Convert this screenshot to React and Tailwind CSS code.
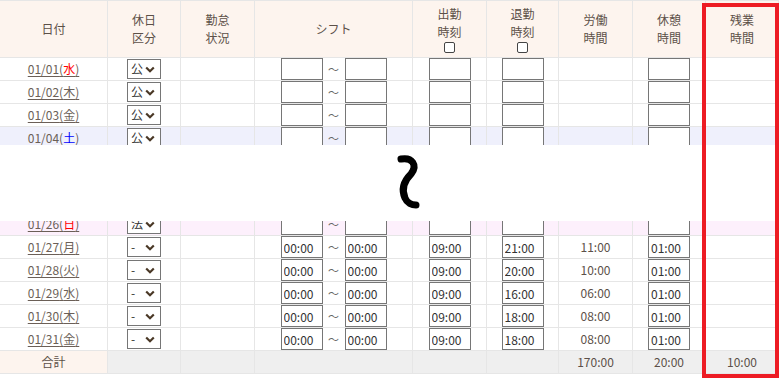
import React from 'react';

const W = ['w-[108px]', 'w-[73px]', 'w-[74px]', 'w-[158px]', 'w-[74px]', 'w-[72px]', 'w-[74px]', 'w-[73px]', 'w-[73px]'];

const Cell = ({ i, className = '', children }) => (
  <div className={`${W[i]} shrink-0 h-full border-r border-[#e6e6e6] flex items-center justify-center ${className}`}>
    {children}
  </div>
);

const Chevron = () => (
  <svg width="10" height="7" viewBox="0 0 10 7">
    <path d="M1.2 1.5 L5 5.2 L8.8 1.5" fill="none" stroke="#4a3826" strokeWidth="2.2" />
  </svg>
);

const Select = ({ value }) => (
  <div className="w-[34px] h-[20px] border border-[#767676] bg-white flex items-center justify-between pl-[3px] pr-[5px] text-[12px] text-[#333]">
    <span>{value}</span>
    <Chevron />
  </div>
);

const Box = ({ value = '' }) => (
  <input
    readOnly
    value={value}
    className="w-[42px] h-[22px] border border-[#767676] bg-white px-[2px] text-[12px] text-[#333] outline-none"
  />
);

const Row = ({ date, dow, dowColor, kubun, shift, start = '', end = '', work = '', rest = '', bg = 'bg-white' }) => (
  <div className={`flex h-[23px] shrink-0 border-b border-[#e6e6e6] ${bg}`}>
    <Cell i={0}>
      <a className="text-[12px] text-[#6b5f57] underline underline-offset-2 cursor-pointer">
        {date}(<span className={dowColor}>{dow}</span>)
      </a>
    </Cell>
    <Cell i={1}>
      <Select value={kubun} />
    </Cell>
    <Cell i={2} />
    <Cell i={3}>
      <Box value={shift} />
      <span className="w-[22px] text-center text-[11px] text-[#666]">～</span>
      <Box value={shift} />
    </Cell>
    <Cell i={4}>
      <Box value={start} />
    </Cell>
    <Cell i={5}>
      <Box value={end} />
    </Cell>
    <Cell i={6} className="text-[12px] text-[#5c5048]">{work}</Cell>
    <Cell i={7}>
      <Box value={rest} />
    </Cell>
    <Cell i={8} />
  </div>
);

const Head = ({ i, lines, check }) => (
  <Cell i={i} className="flex-col leading-[18px] text-[12px] text-[#5c5048]">
    {lines.map((l) => (
      <span key={l}>{l}</span>
    ))}
    {check && <span className="mt-[1px] w-[11px] h-[11px] border border-[#444] rounded-[2px] bg-white" />}
  </Cell>
);

const tail = [
  ['01/27', '月', '21:00', '11:00'],
  ['01/28', '火', '20:00', '10:00'],
  ['01/29', '水', '16:00', '06:00'],
  ['01/30', '木', '18:00', '08:00'],
  ['01/31', '金', '18:00', '08:00'],
];

export default function App() {
  return (
    <div className="relative w-[779px] h-[380px] bg-white overflow-hidden font-['Noto_Sans_CJK_JP','Noto_Sans',sans-serif]">
      <div className="flex h-[58px] border-t border-b border-[#e6e6e6] bg-[#fdf4ee]">
        <Head i={0} lines={['日付']} />
        <Head i={1} lines={['休日', '区分']} />
        <Head i={2} lines={['勤怠', '状況']} />
        <Head i={3} lines={['シフト']} />
        <Head i={4} lines={['出勤', '時刻']} check />
        <Head i={5} lines={['退勤', '時刻']} check />
        <Head i={6} lines={['労働', '時間']} />
        <Head i={7} lines={['休憩', '時間']} />
        <Head i={8} lines={['残業', '時間']} />
      </div>

      <Row date="01/01" dow="水" dowColor="text-[#ff0000]" kubun="公" />
      <Row date="01/02" dow="木" kubun="公" />
      <Row date="01/03" dow="金" kubun="公" />
      <div className="h-[18px] overflow-hidden">
        <Row date="01/04" dow="土" dowColor="text-[#0000ff]" kubun="公" bg="bg-[#eff0fc]" />
      </div>

      <div className="h-[76px] bg-white flex items-center">
        <svg className="ml-[394px]" width="30" height="60" viewBox="0 0 30 60">
          <path
            d="M7 6 C18 4, 24 12, 17 21 C10 28, 7 36, 11 45 C13 50, 18 52, 22 52"
            fill="none"
            stroke="#000"
            strokeWidth="7"
            strokeLinecap="round"
          />
        </svg>
      </div>

      <div className="h-[15px] overflow-hidden flex flex-col justify-end">
        <Row date="01/26" dow="日" dowColor="text-[#ff0000]" kubun="法" bg="bg-[#fdf0fc]" />
      </div>

      {tail.map(([d, w, e, work]) => (
        <Row key={d} date={d} dow={w} kubun="-" shift="00:00" start="09:00" end={e} work={work} rest="01:00" />
      ))}

      <div className="flex h-[23px] border-b border-[#e6e6e6] bg-[#efefef] text-[12px] text-[#5c5048]">
        <Cell i={0} className="bg-[#fdf4ee]">合計</Cell>
        <Cell i={1} />
        <Cell i={2} />
        <Cell i={3} />
        <Cell i={4} />
        <Cell i={5} />
        <Cell i={6}>170:00</Cell>
        <Cell i={7}>20:00</Cell>
        <Cell i={8}>10:00</Cell>
      </div>

      <div className="absolute left-[702px] top-[3px] w-[77px] h-[375px] border-4 border-[#ed1c24] pointer-events-none" />
    </div>
  );
}
